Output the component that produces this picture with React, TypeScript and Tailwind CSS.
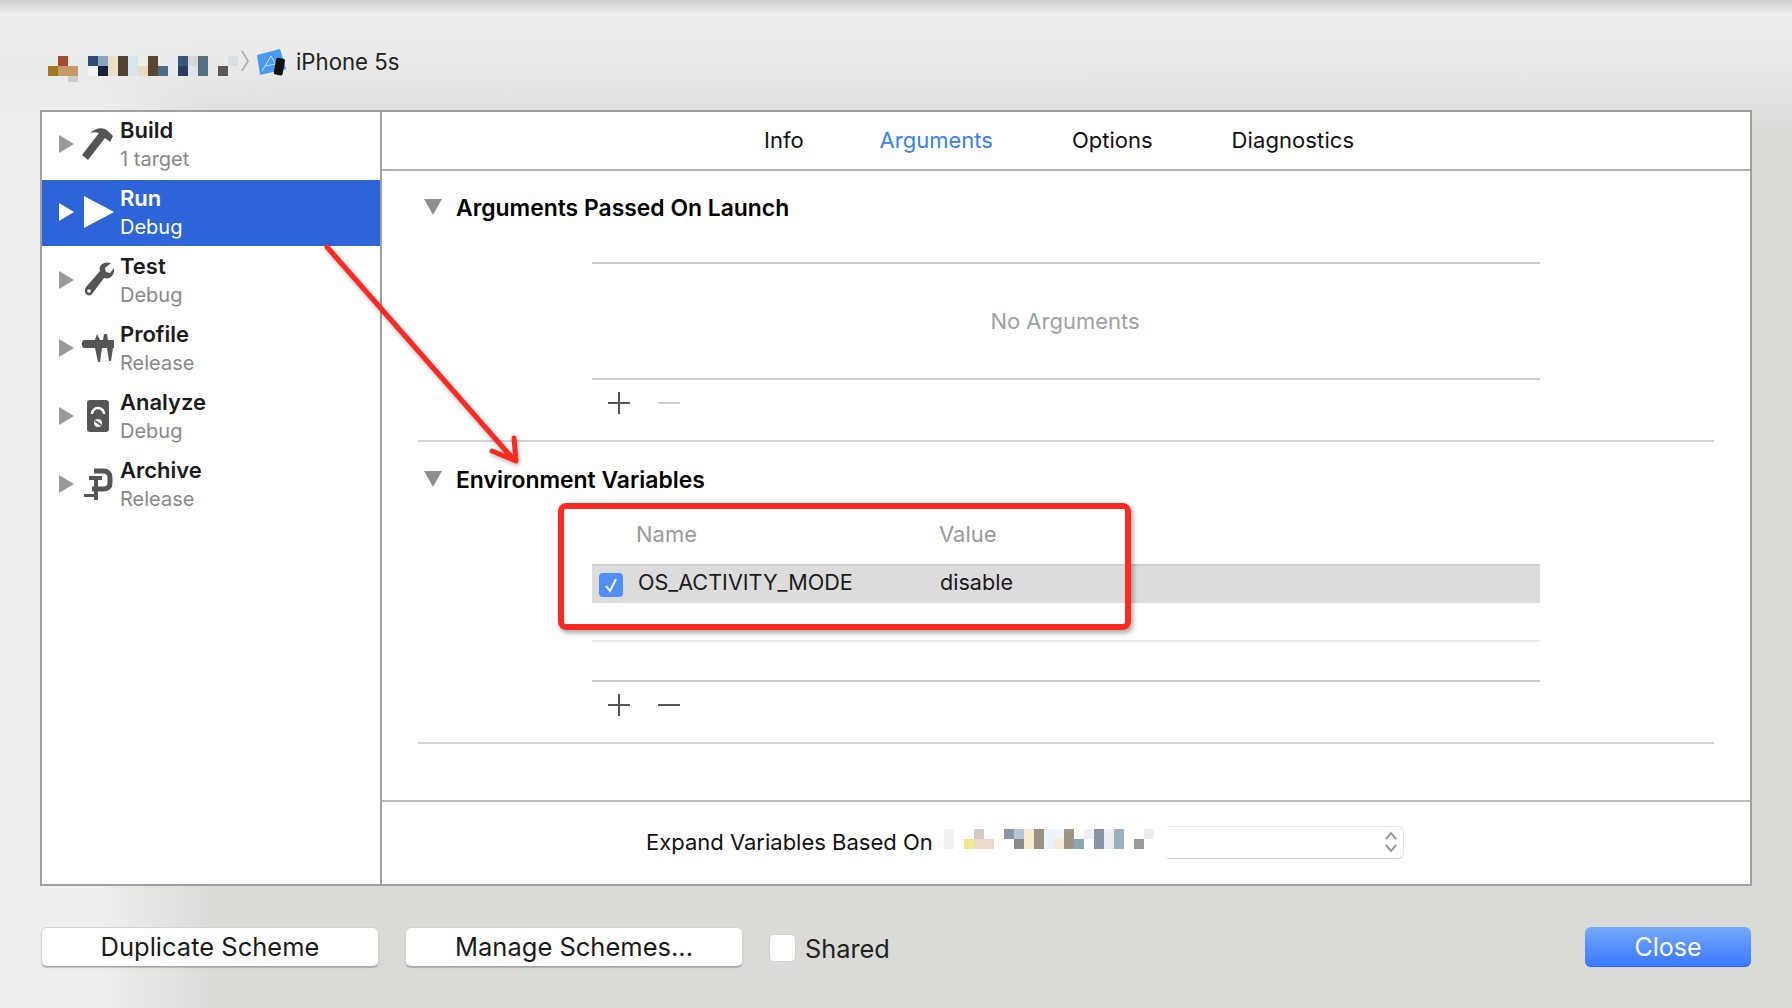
import React from "react";

const FONT = "font-['Inter','Liberation_Sans',sans-serif]";

type Cell = [number, number, number, string];

const topCells: Cell[] = [
  [1, 0, 10, "#a84a30"], [0, 1, 10, "#a07a28"], [1, 1, 10, "#c99a68"], [2, 1, 10, "#c99a68"], [2, 2, 6, "#cccccc"],
  [4, 0, 10, "#2d4a70"], [5, 0, 10, "#8aa5c0"], [4, 1, 10, "#f4f4f6"], [5, 1, 10, "#1a2238"],
  [6, 0, 20, "#ecdfc4"], [7, 0, 20, "#4f4234"], [8, 0, 20, "#d5e6ef"], [9, 0, 10, "#eff0e4"], [9, 1, 10, "#e9dcc0"],
  [10, 0, 20, "#5c4633"], [11, 1, 10, "#4a6b85"], [12, 0, 20, "#e8eaee"], [13, 0, 10, "#355878"], [13, 1, 10, "#2a3d60"],
  [14, 0, 10, "#d8d8d8"], [14, 1, 10, "#dde5ea"], [15, 0, 20, "#527080"], [16, 0, 20, "#e8e8e8"], [17, 1, 10, "#5c5855"], [18, 0, 10, "#d8dde2"],
];

const expandCells: Cell[] = [
  [0, 0, 20, "#f0f0f2"], [3, 0, 10, "#d8c8c4"], [2, 1, 10, "#f0e890"], [3, 1, 10, "#eadbc8"], [4, 1, 10, "#eadbc8"],
  [6, 0, 10, "#8a96a8"], [7, 0, 10, "#b5c5d5"], [7, 1, 10, "#8a8a8e"], [8, 0, 20, "#f8ecd4"], [9, 0, 20, "#9a9084"],
  [10, 0, 20, "#e8f2f8"], [11, 0, 10, "#f0f4f4"], [11, 1, 10, "#f8ecd8"], [12, 0, 20, "#a09484"], [13, 1, 10, "#8aa5b5"],
  [14, 0, 10, "#f0f0f2"], [15, 0, 20, "#8a94a8"], [16, 0, 20, "#eeeef0"], [17, 0, 20, "#9ab0c0"], [19, 1, 10, "#9c9894"], [20, 0, 10, "#e8eef4"],
];

function Pixels({ cells, w, h, className }: { cells: Cell[]; w: number; h: number; className: string }) {
  return (
    <svg width={w} height={h} viewBox={`0 0 ${w} ${h}`} className={`shrink-0 block ${className}`}>
      {cells.map(([c, r, ch, fill], i) => (
        <rect key={i} x={c * 10} y={r * 10} width={10} height={ch} fill={fill} />
      ))}
    </svg>
  );
}

const ICON = "#555555";

function SchemeIcon({ name, top, color }: { name: string; top: number; color: string }) {
  return (
    <svg width={40} height={68} viewBox="0 0 40 68" className="shrink-0 block">
      <g transform={`translate(-78,-${top})`} fill={color}>
        {name === "Build" && (
          <path d="M82 155 L99 133 C96 132 93 132 90 133 C96 127 104 127 108 131 L113 136 L110 142 L105 138 L88 160 Z" />
        )}
        {name === "Run" && <path d="M84 196 L114 212 L84 228 Z" />}
        {name === "Test" && (
          <>
            <path d="M87 287 L101 271 C99 265 105 261 112 263 L106 268 L107 272 L111 273 L115 268 C116 275 111 280 105 278 L93 294 C90 298 83 293 87 287 Z" transform="translate(-1,0)" />
            <circle cx={89} cy={291} r={1.8} fill="#ffffff" />
          </>
        )}
        {name === "Profile" && (
          <path d="M84 340 L95 340 L97 334 L100 340 L103 340 L104 334 L107 334 L108 340 L114 340 L114 348 L113 348 L111 361 L109 361 L107 348 L102 348 L100 362 L98 362 L95 348 L84 348 C81 347 81 341 84 340 Z" />
        )}
        {name === "Analyze" && (
          <>
            <rect x={87} y={400} width={22} height={32} rx={3} />
            <path d="M92 414 A6 6 0 0 1 104 414" fill="none" stroke="#ffffff" strokeWidth={2.5} />
            <circle cx={98} cy={423} r={4} fill="#ffffff" />
            <path d="M95 421 L101 425" stroke={color} strokeWidth={1.6} />
          </>
        )}
        {name === "Archive" && (
          <>
            <path d="M94 471 H103 Q110 471 110 478 V483 Q110 489 103 489 H92" fill="none" stroke={color} strokeWidth={5} />
            <rect x={89} y={476} width={13} height={4} />
            <rect x={94} y={477} width={4} height={23} />
            <rect x={84} y={494} width={14} height={3} />
          </>
        )}
      </g>
    </svg>
  );
}

const schemes = [
  { name: "Build", sub: "1 target", top: 112 },
  { name: "Run", sub: "Debug", top: 180 },
  { name: "Test", sub: "Debug", top: 248 },
  { name: "Profile", sub: "Release", top: 316 },
  { name: "Analyze", sub: "Debug", top: 384 },
  { name: "Archive", sub: "Release", top: 452 },
];

function Sidebar() {
  return (
    <div className="w-[340px] shrink-0 border-r-2 border-[#a0a0a0]">
      {schemes.map((s) => {
        const sel = s.name === "Run";
        return (
          <div key={s.name} className="h-[68px]">
            <div className={sel ? "h-[66px] flex bg-[#2d65d9]" : "h-[68px] flex"}>
              <div className="w-[17px] shrink-0" />
              <div className="w-[15px] h-[64px] flex items-center shrink-0 mr-[4px]">
                <svg width={15} height={18} viewBox="0 0 15 18" className="block">
                  <path d="M0 0 L15 9 L0 18 Z" fill={sel ? "#ffffff" : "#999999"} />
                </svg>
              </div>
              <SchemeIcon name={s.name} top={s.top} color={sel ? "#ffffff" : ICON} />
              <div className="ml-[2px] pt-[4px]">
                <div className={`text-[22px] leading-[28px] font-semibold ${sel ? "text-white" : "text-[#1c1c1c]"}`}>{s.name}</div>
                <div className={`text-[20px] leading-[30px] ${sel ? "text-white" : "text-[#888888]"}`}>{s.sub}</div>
              </div>
            </div>
          </div>
        );
      })}
    </div>
  );
}

function SectionTitle({ children }: { children: React.ReactNode }) {
  return (
    <div className="h-[30px] flex items-center pl-[42px]">
      <svg width={18} height={16} viewBox="0 0 18 16" className="block shrink-0 mt-[-2px]">
        <path d="M0 0 L18 0 L9 16 Z" fill="#8f8f8f" />
      </svg>
      <div className="ml-[14px] text-[22.9px] font-semibold text-black whitespace-nowrap">{children}</div>
    </div>
  );
}

function PlusMinus({ minusColor }: { minusColor: string }) {
  return (
    <div className="h-[46px] flex items-center pl-[16px] gap-[28px]">
      <svg width={22} height={22} viewBox="0 0 22 22" className="block">
        <path d="M0 11 H22 M11 0 V22" stroke="#555555" strokeWidth={2} />
      </svg>
      <svg width={22} height={22} viewBox="0 0 22 22" className="block">
        <path d="M0 11 H22" stroke={minusColor} strokeWidth={2} />
      </svg>
    </div>
  );
}

function Content() {
  return (
    <div className="flex-1 flex flex-col min-w-0">
      <div className="h-[59px] border-b-2 border-[#b0b0b0] flex items-center pl-[382px] text-[22px] leading-[33px] text-[#111111] shrink-0">
        <span>Info</span>
        <span className="ml-[76px] text-[#3a80e8]">Arguments</span>
        <span className="ml-[79px]">Options</span>
        <span className="ml-[79px] tracking-[0.1px]">Diagnostics</span>
      </div>

      <div className="pt-[22px]">
        <SectionTitle>Arguments Passed On Launch</SectionTitle>
        <div className="ml-[210px] w-[948px] mt-[39px]">
          <div className="h-[113px] pt-[1px] border-y-2 border-[#cccccc] box-content -mb-[2px] flex items-center justify-center pr-[2px] text-[22px] text-[#a0a0a0]">
            No Arguments
          </div>
          <div className="mt-[2px]">
            <PlusMinus minusColor="#cccccc" />
          </div>
        </div>
        <div className="mx-[36px] mt-[14px] h-[2px] bg-[#d4d4d4]" />
      </div>

      <div className="pt-[23px]">
        <SectionTitle>Environment Variables</SectionTitle>
        <div className="ml-[210px] w-[948px]">
          <div className="h-[69px] relative text-[22px] text-[#999999] flex items-end pb-[13px]">
            <span className="ml-[44px] w-[303px]">Name</span>
            <span>Value</span>
          </div>
          <div className="h-[39px] bg-[#dcdcdc] border-t-2 border-[#cfcfcf] flex items-center pb-[4px] text-[21.6px] text-[#1a1a1a]">
            <div className="ml-[7px] w-[24px] h-[24px] rounded-[4px] bg-[#4f8ff7] flex items-center justify-center mt-[5px] shrink-0">
              <svg width={14} height={16} viewBox="0 0 14 16" className="block">
                <path d="M2 9 L6 14 L12 2" fill="none" stroke="#ffffff" strokeWidth={2} />
              </svg>
            </div>
            <span className="ml-[15px] w-[302px]">OS_ACTIVITY_MODE</span>
            <span>disable</span>
          </div>
          <div className="h-[39px] border-b-2 border-[#e8e8e8]" />
          <div className="h-[40px] border-b-2 border-[#cccccc]" />
          <PlusMinus minusColor="#555555" />
        </div>
        <div className="mx-[36px] mt-[14px] h-[2px] bg-[#d4d4d4]" />
      </div>

      <div className="mt-auto h-[84px] pb-[2px] border-t-2 border-[#bcbcbc] flex items-center pl-[264px] text-[22px] text-[#111111]">
        <span className="w-[298px] shrink-0 whitespace-nowrap">Expand Variables Based On</span>
        <Pixels cells={expandCells} w={223} h={20} className="-mt-[6px] blur-[0.4px]" />
        <div className="w-[237px] h-[33px] rounded-r-[6px] border border-l-0 border-[#e6e6e6] border-b-[#cfcfcf] flex items-center justify-end pr-[5px] shrink-0">
          <svg width={14} height={24} viewBox="0 0 14 24" className="block">
            <path d="M2 9 L7 3 L12 9 M2 15 L7 21 L12 15" fill="none" stroke="#999999" strokeWidth={2} />
          </svg>
        </div>
      </div>
    </div>
  );
}

function Btn({ children }: { children: React.ReactNode }) {
  return (
    <div className="w-[338px] h-[40px] -mt-[1px] rounded-[6px] bg-white border border-[#d2d2d2] border-b-[#a8a8a8] shadow-[0_1px_1px_rgba(0,0,0,0.2)] flex items-center justify-center text-[25.5px] text-[#1a1a1a] shrink-0">
      {children}
    </div>
  );
}

export default function App() {
  return (
    <div
      className={`relative w-[1792px] h-[1008px] overflow-hidden flex flex-col ${FONT} bg-[linear-gradient(to_bottom,#cfcfcf_0px,rgba(238,238,238,1)_14px,rgba(234,234,234,0.9)_70px,rgba(218,218,215,0)_130px),linear-gradient(to_right,#efefef_0px,#efefef_100px,#dadad7_210px,#d9d9d6_100%)]`}
    >
      <div className="h-[110px] pt-[14px] pl-[48px] flex items-center shrink-0">
        <Pixels cells={topCells} w={190} h={26} className="mt-[14px] blur-[0.5px]" />
        <svg width={8} height={22} viewBox="0 0 8 22" className="block ml-[3px] -mt-[2px] shrink-0">
          <path d="M1 1 L7 11 L1 21" fill="none" stroke="#aaaaaa" strokeWidth={1.6} />
        </svg>
        <svg width={32} height={27} viewBox="0 0 32 27" className="block ml-[6px] shrink-0">
          <path d="M2 6 L25 0 L31 20 L5 26 Z" fill="#4a9bf0" />
          <path d="M7 22 L16 7 M16 7 L22 18 M10 17 L21 15" stroke="#bfe0fb" strokeWidth={1} fill="none" />
          <rect x={20} y={9} width={9} height={17} rx={2} fill="#111111" transform="rotate(10 24 17)" />
        </svg>
        <span className="ml-[9px] text-[22.2px] text-[#222222]">iPhone 5s</span>
      </div>

      <div className="ml-[40px] w-[1712px] h-[776px] border-2 border-[#a0a0a0] bg-white flex shrink-0">
        <Sidebar />
        <Content />
      </div>

      <div className="pt-[42px] pl-[41px] pr-[41px] flex items-start">
        <Btn>Duplicate Scheme</Btn>
        <div className="w-[26px] shrink-0" />
        <Btn>Manage Schemes...</Btn>
        <div className="ml-[26px] mt-[6px] w-[27px] h-[28px] rounded-[5px] bg-white border border-[#d2d2d2] shrink-0" />
        <span className="ml-[9px] mt-[2px] text-[25.3px] text-[#222222]">Shared</span>
        <div className="ml-auto w-[166px] h-[40px] -mt-[1px] pt-[2px] rounded-[6px] bg-[linear-gradient(to_bottom,#75aaf9,#3a78fe)] border-b border-[#2f62f0] flex items-center justify-center text-[25px] text-white">
          Close
        </div>
      </div>

      {/* annotation overlays */}
      <div className="absolute left-[558px] top-[503px] w-[573px] h-[127px] border-[6px] border-[#fc2a22] rounded-[8px] shadow-[2px_3px_5px_rgba(0,0,0,0.35)]" />
      <svg className="absolute left-0 top-0 pointer-events-none drop-shadow-[1px_2px_2px_rgba(0,0,0,0.3)]" width={1792} height={1008} viewBox="0 0 1792 1008">
        <path d="M327 247 L514 460 M492 451 L516 461 L514 438" fill="none" stroke="#fc2a22" strokeWidth={5} strokeLinecap="round" strokeLinejoin="round" />
      </svg>
    </div>
  );
}
